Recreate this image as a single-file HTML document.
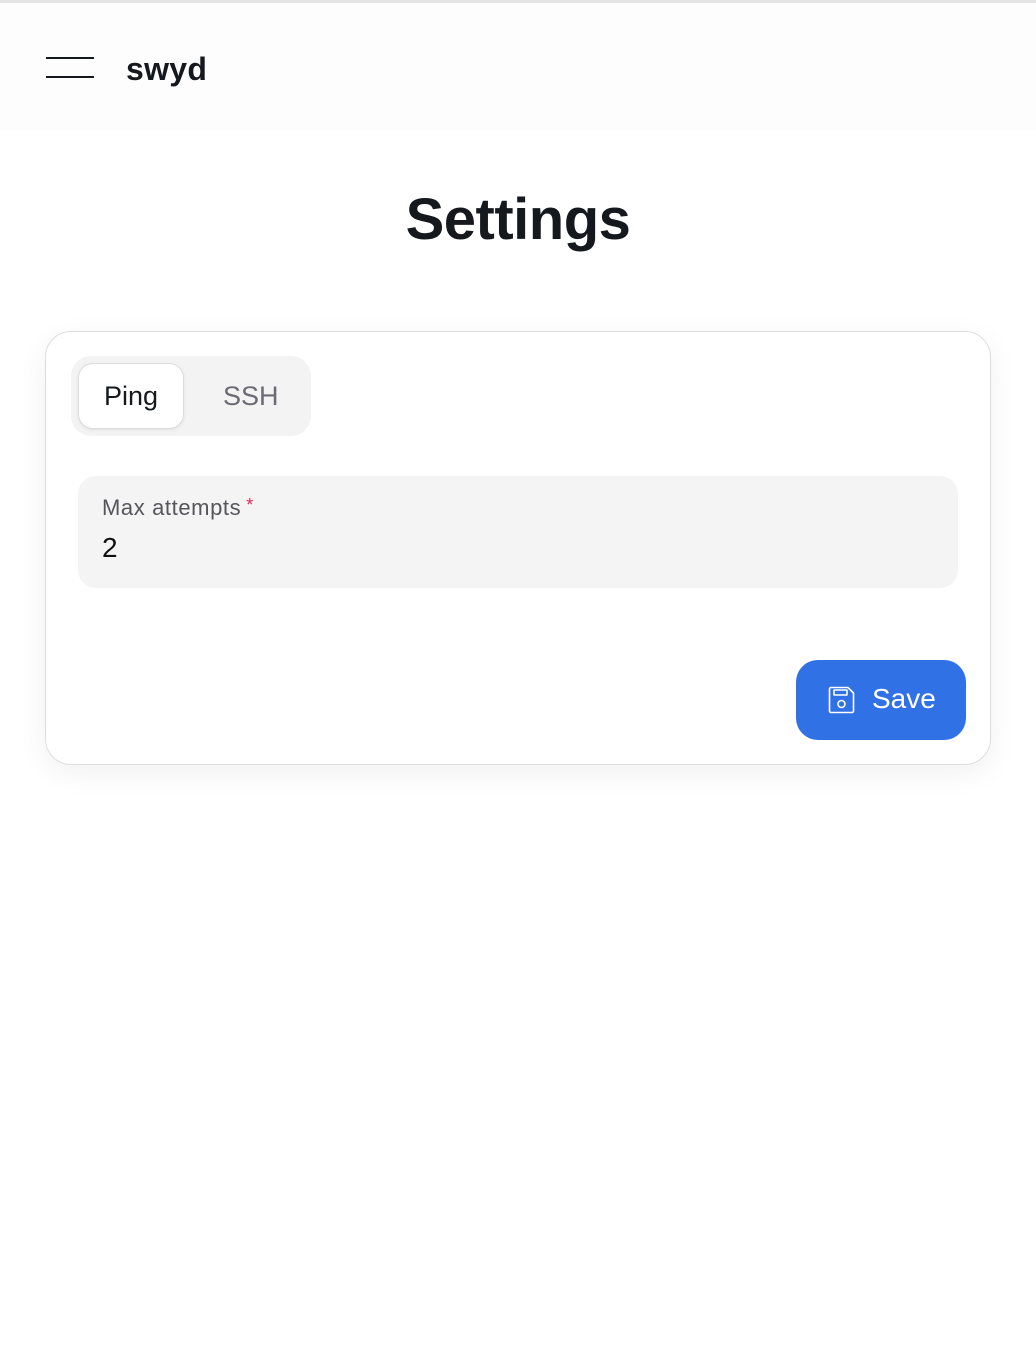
<!DOCTYPE html>
<html><head><meta charset="utf-8"><style>
*{box-sizing:border-box;margin:0;padding:0}
body{width:1036px;height:1348px;background:#fff;font-family:"Liberation Sans",sans-serif;position:relative;overflow:hidden}
.top{position:absolute;left:0;top:0;width:1036px;height:3px;background:#e4e4e4}
.hdr{position:absolute;left:0;top:3px;width:1036px;height:127px;background:#fdfdfd}
.hb{position:absolute;left:46px;width:48px;height:2px;background:#15191e}
.logo{position:absolute;left:126px;top:51px;font-size:32px;font-weight:bold;color:#15191e;letter-spacing:0.3px}
h1{position:absolute;top:186px;left:0;width:1036px;text-align:center;font-size:58px;font-weight:bold;color:#15191e;letter-spacing:-0.5px}
.card{position:absolute;left:45px;top:331px;width:946px;height:434px;border:1px solid #dedede;border-radius:26px;background:#fff;box-shadow:0 8px 30px rgba(0,0,0,0.06)}
.tabs{position:absolute;left:25px;top:24px;width:240px;height:80px;background:#f3f3f3;border-radius:20px}
.tab1{position:absolute;left:7px;top:7px;width:106px;height:66px;background:#fff;border:1px solid #ddd;border-radius:15px;font-size:27px;color:#15191e;text-align:center;line-height:64px;box-shadow:0 1px 3px rgba(0,0,0,0.08)}
.tab2{position:absolute;left:152px;top:0;height:80px;line-height:80px;font-size:27px;color:#6b6b73}
.field{position:absolute;left:32px;top:144px;width:880px;height:112px;background:#f4f4f4;border-radius:18px}
.lbl{position:absolute;left:24px;top:19px;font-size:22px;color:#55555c;letter-spacing:0.6px}
.lbl span{color:#e0245e;font-size:18px;vertical-align:top;margin-left:5px}
.val{position:absolute;left:24px;top:56px;font-size:28px;color:#111}
.btn{position:absolute;left:750px;top:328px;width:170px;height:80px;background:#3071e6;border-radius:22px;color:#fff;font-size:28px}
.btn svg{position:absolute;left:32px;top:26px}
.btn b{position:absolute;left:76px;top:23px;font-weight:normal}
</style></head><body>
<div class="top"></div><div class="hdr"></div>
<div class="hb" style="top:57px"></div><div class="hb" style="top:76px"></div>
<div class="logo">swyd</div>
<h1>Settings</h1>
<div class="card">
<div class="tabs"><div class="tab1">Ping</div><div class="tab2">SSH</div></div>
<div class="field"><div class="lbl">Max attempts<span>*</span></div><div class="val">2</div></div>
<div class="btn"><svg width="27" height="28" viewBox="0 0 27 28" fill="none" stroke="#fff" stroke-width="1.6"><path d="M3 1.5h17l5.5 5.5v18a1.5 1.5 0 0 1-1.5 1.5H3A1.5 1.5 0 0 1 1.5 25V3A1.5 1.5 0 0 1 3 1.5z"/><rect x="6" y="4" width="13" height="5" rx="0.5"/><circle cx="13.5" cy="18" r="3.5"/></svg><b>Save</b></div>
</div>
</body></html>
